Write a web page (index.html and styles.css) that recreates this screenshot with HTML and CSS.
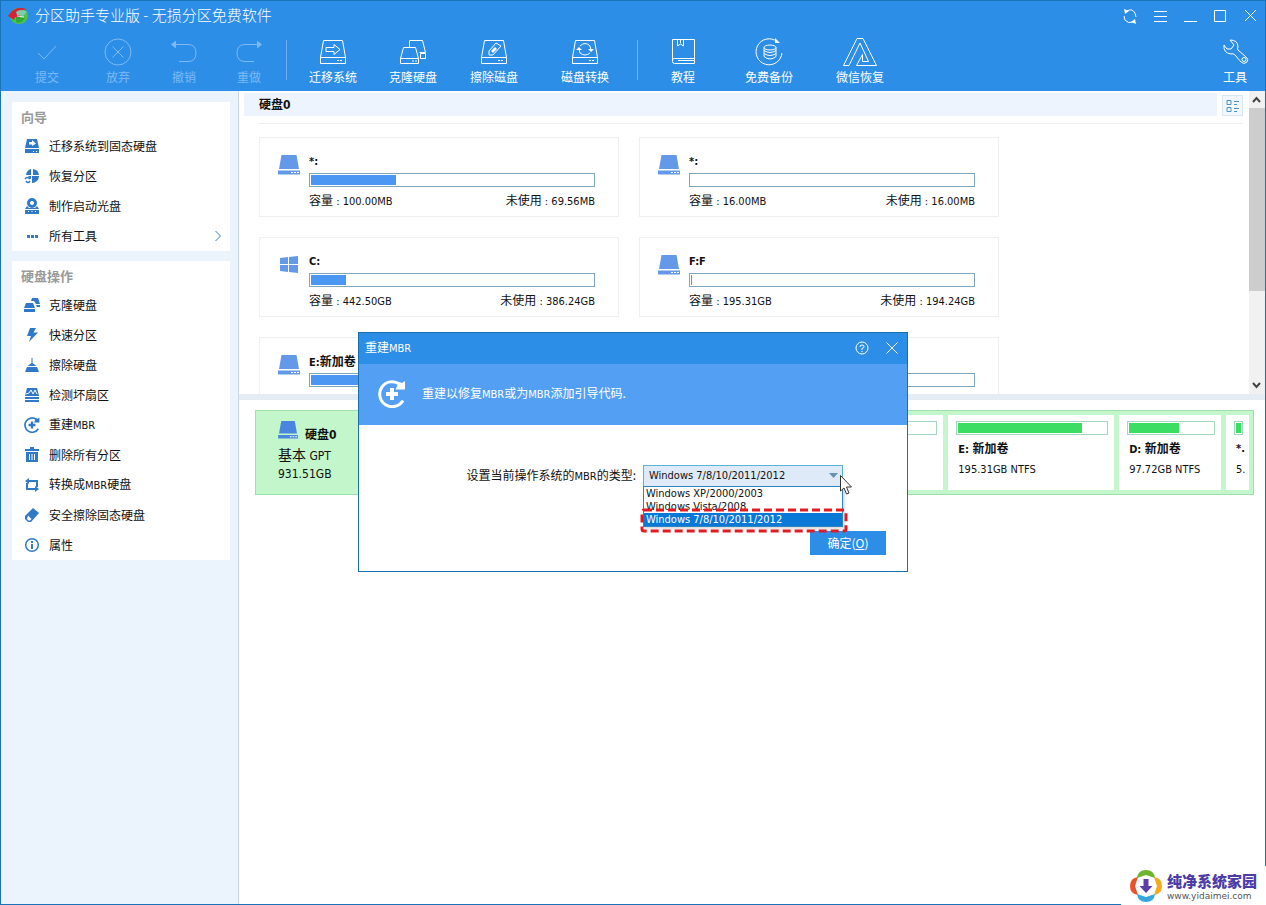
FILE: index.html
```html
<!DOCTYPE html>
<html lang="zh-CN">
<head>
<meta charset="utf-8">
<title>分区助手专业版 - 无损分区免费软件</title>
<link rel="stylesheet" href="styles.css">
</head>
<body>
<svg class="defs" aria-hidden="true">
  <symbol id="disk" viewBox="0 0 22 20"><path fill="currentColor" d="M3.500 0h15l2.500 14h-20zM0 15.500h22v4h-22z"/><path fill="#fff" d="M13 17h2v1h-2zM16 17h2v1h-2zM19 17h2v1h-2z"/></symbol>
  <symbol id="drive" viewBox="0 0 32 28"><path d="M6.500 2.500h19l3 17h-25zM3.500 19.500h25v6h-25zM20 22.500h2M23 22.500h2"/></symbol>
  <symbol id="rebuild" viewBox="0 0 28 28"><path d="M25 20.500A12.500 12.500 0 1 1 21.500 4" fill="none" stroke="currentColor" stroke-width="3"/><path fill="currentColor" d="M17.500 9.500h9.500V1l-3 2-3-1zM12 8h4v4h4v4h-4v4h-4v-4H8v-4h4z"/></symbol>
</svg>
<div class="window">
  <header class="header">
    <div class="titlebar">
      <svg class="logo" viewBox="0 0 22 18"><ellipse cx="12" cy="9" rx="9" ry="8" fill="#4fc24a"/><path d="M1 9l4-5q8-6 15-1-7-1-10 3l4 1-2 4-4-1-1 3z" fill="#d92230"/><path d="M9 5q5-4 11 0l-4 4-6-1z" fill="#7ccdb0"/><path d="M9 10l9 1q-4 6-9 4z" fill="#2fa838"/><path d="M10 9l7 1" stroke="#e9f4da"/></svg>
      <h1 class="title">分区助手专业版 - 无损分区免费软件</h1>
      <div class="controls">
        <button aria-label="刷新"><svg viewBox="0 0 16 16"><path d="M5 3Q10 0 13 5l1 4M11 14Q6 16 3 12L2 8"/><path d="M2 1l1 5 4-3zM14 16l-1-5-4 3z" fill="#fff" stroke="none"/></svg></button>
        <button aria-label="菜单"><svg viewBox="0 0 16 16"><path d="M2 3.500h13M2 8.500h13M2 13.500h13"/></svg></button>
        <button aria-label="最小化"><svg viewBox="0 0 16 16"><path d="M2 13.500h13"/></svg></button>
        <button aria-label="最大化"><svg viewBox="0 0 16 16"><path d="M2.500 2.500h11v11h-11z"/></svg></button>
        <button aria-label="关闭"><svg viewBox="0 0 16 16"><path d="M3 2l11 11M14 2L3 13"/></svg></button>
      </div>
    </div>
    <div class="toolbar">
      <div class="tools tools-edit">
        <button class="tool" disabled><svg viewBox="0 0 32 28"><path d="M7 15l6 6L25 8"/></svg>提交</button>
        <button class="tool" disabled><svg viewBox="0 0 32 28"><circle cx="16" cy="14" r="13"/><path d="M10.500 8.500l11 11M21.500 8.500l-11 11"/></svg>放弃</button>
        <button class="tool" disabled><svg viewBox="0 0 32 28"><path d="M6 6.500h14q8 0 8 8.500t-8 8.500h-9"/><path class="solid" d="M3 6.500l5-4v8z"/></svg>撤销</button>
        <button class="tool" disabled><svg viewBox="0 0 32 28"><path d="M26 6.500H12q-8 0-8 8.500t8 8.500h9"/><path class="solid" d="M29 6.500l-5-4v8z"/></svg>重做</button>
      </div>
      <div class="sep"></div>
      <div class="tools tools-disk">
        <button class="tool"><svg viewBox="0 0 32 28"><use href="#drive"/><path d="M9 9.500h8v-3l6 5-6 5v-3H9z"/></svg>迁移系统</button>
        <button class="tool"><svg viewBox="0 0 32 28"><path d="M6.500 9.500h12l3 11h-18zM3.500 20.500h18v5h-18zM15 23h2M18 23h2M12.500 9V2.500h13l3 12h-6M23.500 15.500h5v5h-5z"/></svg>克隆硬盘</button>
        <button class="tool"><svg viewBox="0 0 32 28"><use href="#drive"/><path d="M11 13l7-8 5 3-8 9h-4z"/><path class="solid" d="M13 13l4-4 2 2-4 4z"/></svg>擦除磁盘</button>
        <button class="tool"><svg viewBox="0 0 32 28"><use href="#drive"/><path d="M11 8q5-5 10 0l1 4M21 15q-5 4-10 0l-1-4"/><path class="solid" d="M19 11h6l-3 3zM7 12h6l-3-3z"/></svg>磁盘转换</button>
      </div>
      <div class="sep"></div>
      <div class="tools tools-help">
        <button class="tool"><svg viewBox="0 0 32 28"><path d="M5.500 1.500h22v24h-20q-2 0-2-2zM5.500 22q0-1.500 2-1.500h20M11 22.500h16M10.500 2v6l3-2 3 2V2M13.500 2v3"/></svg>教程</button>
        <button class="tool"><svg viewBox="0 0 32 28"><path d="M29 15A13 13 0 1 1 24 3.500"/><path class="solid" d="M22 5V0l5 5z"/><ellipse cx="17" cy="9.500" rx="6" ry="2.500"/><path d="M11 9.500v9q6 5 12 0v-9M11 12.500q6 4 12 0M11 15.500q6 4 12 0"/></svg>免费备份</button>
        <button class="tool"><svg class="wide" viewBox="0 0 36 28"><path d="M1.500 27.500L15 .5h6l13.500 27h-20l6-11v7h6L18 5 7 27.500z"/></svg>微信恢复</button>
      </div>
      <div class="tools tools-end">
        <button class="tool"><svg viewBox="0 0 32 28"><path d="M5 7q-1 8 7 9 2-1 4 1l6 7q3 3 6 0 2-3-1-5l-8-7q-1-1 0-3 0-7-8-7l4 5-3 4-4 0z"/><circle cx="25" cy="21.500" r="2"/></svg>工具</button>
      </div>
    </div>
  </header>

  <div class="content">
    <aside class="sidebar">
      <nav class="panel">
        <h2>向导</h2>
        <button class="item"><svg viewBox="0 0 16 16"><path fill="currentColor" d="M3 1h10l2 9H1zM1 11h14v4H1z"/><path fill="#fff" d="M5 4h3V2l4 3.500L8 8V6.500H5zM9 13h1v1H9zM12 13h1v1h-1z"/></svg>迁移系统到固态硬盘</button>
        <button class="item"><svg viewBox="0 0 16 16"><path fill="currentColor" d="M9 1v6h6A7 7 0 0 0 9 1zM7 1a7 7 0 0 0-5 6h5zM8 8h7a7 7 0 0 1-7 7zM7 8v3H6L4 8z"/><path d="M6 13q-2 3-4 0M1 11q2-3 5 0" fill="none" stroke="currentColor" stroke-width="1.500"/></svg>恢复分区</button>
        <button class="item"><svg viewBox="0 0 16 16"><circle cx="8" cy="5" r="3.500" fill="none" stroke="currentColor" stroke-width="3"/><path fill="currentColor" d="M3 8l2 2h6l2-2 2 3H1zM1 12h14v4H1z"/><path fill="#fff" d="M4 13h1v1H4zM7.500 13h1v1h-1zM11 13h1v1h-1z"/></svg>制作启动光盘</button>
        <button class="item"><svg viewBox="0 0 16 16"><path fill="currentColor" d="M3 7h3v3H3zM7 7h3v3H7zM11 7h3v3h-3z"/></svg>所有工具<svg class="chevron" viewBox="0 0 8 10"><path d="M2.500 0l5 5-5 5" fill="none" stroke="currentColor"/></svg></button>
      </nav>
      <nav class="panel">
        <h2>硬盘操作</h2>
        <button class="item"><svg viewBox="0 0 16 16"><path fill="currentColor" d="M2 6h7l2 5H0zM0 12h11v3H0zM8 1h6l2 6h-4l-2-3H7zM12 8h4v2h-3z"/></svg>克隆硬盘</button>
        <button class="item"><svg viewBox="0 0 16 16"><path fill="currentColor" d="M6 1h6L9.500 5.500H14L5 15l2-6H3z"/></svg>快速分区</button>
        <button class="item"><svg viewBox="0 0 16 16"><path fill="currentColor" d="M7.500 1h1v5l4 3h-9l4-3zM3 10h10l2 5H1z"/></svg>擦除硬盘</button>
        <button class="item"><svg viewBox="0 0 16 16"><path fill="currentColor" d="M3 1h10l2 8H1zM1 10h14v2H1zM1 13h14v2H1z"/><path d="M2 7l3-1 2-3 2 4 2-4 2 4" fill="none" stroke="#fff"/></svg>检测坏扇区</button>
        <button class="item"><svg><use href="#rebuild"/></svg><span>重建<span class="lat">MBR</span></span></button>
        <button class="item"><svg viewBox="0 0 16 16"><path fill="currentColor" d="M6 0h4v2h5v2H1V2h5zM2 5h12v10H2z"/><path stroke="#fff" d="M5.500 7v6M8 7v6M10.500 7v6"/></svg>删除所有分区</button>
        <button class="item"><svg viewBox="0 0 16 16"><path d="M4 4h9v6M12 12H3V6" fill="none" stroke="currentColor" stroke-width="2"/><path fill="currentColor" d="M5 1v6L1 4zM11 9v6l4-3z"/></svg><span>转换成<span class="lat">MBR</span>硬盘</span></button>
        <button class="item"><svg viewBox="0 0 16 16"><path fill="currentColor" d="M9 1l6 5-8 9H4L1 12V9z"/><path fill="#fff" d="M4 8.500l3.500 3.500L6 13.500H4.500L3 12z"/></svg>安全擦除固态硬盘</button>
        <button class="item"><svg viewBox="0 0 16 16"><circle cx="8" cy="8" r="6.300" fill="none" stroke="currentColor" stroke-width="1.500"/><path fill="currentColor" d="M7 4h2v2H7zM7 7h2v5H7z"/></svg>属性</button>
      </nav>
    </aside>

    <main class="main">
      <section class="volumes">
        <div class="volumes-view">
          <div class="strip-row">
            <h2 class="strip">硬盘<span class="num">0</span></h2>
            <button class="view" aria-label="视图"><svg viewBox="0 0 14 14"><path d="M1 1.500h4v4H1zM1 8.500h4v4H1zM8 2.500h5M8 5.500h3M8 9.500h5M8 12.500h3" fill="none" stroke="currentColor"/></svg></button>
          </div>
          <div class="cards">
            <article class="card"><svg class="vol-icon"><use href="#disk"/></svg><div class="vol"><h3>*:</h3><div class="bar"><i style="width:30%"></i></div><p><span>容量<span class="lat"> : 100.00MB</span></span><span>未使用<span class="lat"> : 69.56MB</span></span></p></div></article>
            <article class="card"><svg class="vol-icon"><use href="#disk"/></svg><div class="vol"><h3>*:</h3><div class="bar"></div><p><span>容量<span class="lat"> : 16.00MB</span></span><span>未使用<span class="lat"> : 16.00MB</span></span></p></div></article>
            <article class="card"><svg class="vol-icon" viewBox="0 0 22 20"><path fill="currentColor" d="M2 3l8-1v7H2zM11 2l9-1v8h-9zM2 10h8v7l-8-1zM11 10h9v8l-9-1z"/></svg><div class="vol"><h3>C:</h3><div class="bar"><i style="width:12.5%"></i></div><p><span>容量<span class="lat"> : 442.50GB</span></span><span>未使用<span class="lat"> : 386.24GB</span></span></p></div></article>
            <article class="card"><svg class="vol-icon"><use href="#disk"/></svg><div class="vol"><h3>F:F</h3><div class="bar"><i style="width:0.5%"></i></div><p><span>容量<span class="lat"> : 195.31GB</span></span><span>未使用<span class="lat"> : 194.24GB</span></span></p></div></article>
            <article class="card"><svg class="vol-icon"><use href="#disk"/></svg><div class="vol"><h3>E:<span class="cjk">新加卷</span></h3><div class="bar"><i style="width:83%"></i></div></div></article>
            <article class="card"><svg class="vol-icon"><use href="#disk"/></svg><div class="vol"><h3>D:</h3><div class="bar"><i style="width:58%"></i></div></div></article>
          </div>
        </div>
        <div class="scrollbar">
          <svg viewBox="0 0 15 16"><path d="M4 10l3.500-4L11 10"/></svg>
          <div class="thumb"></div>
          <svg viewBox="0 0 15 16"><path d="M4 6l3.500 4L11 6"/></svg>
        </div>
      </section>
      <section class="map">
        <div class="disk-row">
          <div class="disk-info">
            <h3><svg><use href="#disk"/></svg><span>硬盘<span class="num">0</span></span></h3>
            <p><span class="type">基本</span> GPT</p>
            <p>931.51GB</p>
          </div>
          <div class="part"><div class="bar"></div></div>
          <div class="part"><div class="bar"><i style="width:84%"></i></div><h3>E: <span class="cjk">新加卷</span></h3><p>195.31GB NTFS</p></div>
          <div class="part"><div class="bar"><i style="width:60%"></i></div><h3>D: <span class="cjk">新加卷</span></h3><p>97.72GB NTFS</p></div>
          <div class="part"><div class="bar"><i style="width:100%"></i></div><h3>*.</h3><p>5.</p></div>
        </div>
      </section>
    </main>
  </div>

  <div class="overlay">
    <section class="dialog" role="dialog" aria-labelledby="dlg-title">
      <header class="dialog-title">
        <h2 id="dlg-title">重建<span class="lat">MBR</span></h2>
        <button aria-label="帮助"><svg viewBox="0 0 16 16"><circle cx="8" cy="8" r="6"/><path d="M6 7q0-2 2-2t2 1.500Q10 8 8 8.500V10M8 11v1"/></svg></button>
        <button aria-label="关闭"><svg viewBox="0 0 16 16"><path d="M2.500 2.500l11 11M13.500 2.500l-11 11"/></svg></button>
      </header>
      <div class="banner"><svg><use href="#rebuild"/></svg><p>重建以修复<span class="lat">MBR</span>或为<span class="lat">MBR</span>添加引导代码.</p></div>
      <form class="form">
        <div class="field">
          <label for="mbr">设置当前操作系统的<span class="lat">MBR</span>的类型:</label>
          <div class="combo">
            <select id="mbr"><option>Windows 7/8/10/2011/2012</option></select>
            <svg class="arrow" viewBox="0 0 9 5"><path d="M0 0h9L4.500 5z" fill="#6391b8"/></svg>
            <ul class="options" role="listbox">
              <li role="option">Windows XP/2000/2003</li>
              <li role="option">Windows Vista/2008</li>
              <li role="option" class="selected" aria-selected="true">Windows 7/8/10/2011/2012</li>
            </ul>
            <svg class="mark" viewBox="0 0 208 25"><rect x="2" y="2" width="204" height="21" rx="2" fill="none" stroke="#e01b22" stroke-width="3" stroke-dasharray="8 4"/></svg>
            <svg class="cursor" viewBox="0 0 12 20"><path d="M.5.500v15.500l3.500-3 2.500 6 2.500-1-2.500-6h5z" fill="#fff" stroke="#333"/></svg>
          </div>
        </div>
        <button class="ok" type="button">确定(<u>O</u>)</button>
      </form>
    </section>
  </div>

  <div class="watermark">
    <svg viewBox="0 0 34 34"><path d="M8 9q1-8 9-8 8 0 9 8l-9-3z" fill="#6cb52c"/><path d="M25 8q8 1 8 9 0 8-8 9l3-9z" fill="#f7a81b"/><path d="M26 25q-1 8-9 8-8 0-9-8l9 3z" fill="#35a8e0"/><path d="M9 8Q1 9 1 17q0 8 8 9L6 17z" fill="#e9532c"/><path d="M14.500 10h5v7h4L17 24l-6.500-7h4z" fill="#5b3fa8"/></svg>
    <div><strong>纯净系统家园</strong><span>www.yidaimei.com</span></div>
  </div>
</div>
</body>
</html>
```
FILE: styles.css
```css
* { box-sizing: border-box; }
body, h1, h2, h3, p, ul { margin: 0; padding: 0; }
body {
  font: 12px/16px "Noto Sans CJK SC", sans-serif;
  color: #111;
}
button {
  font: inherit;
  color: inherit;
  border: 0;
  padding: 0;
  background: none;
}
svg { flex: none; }
.defs { position: absolute; width: 0; height: 0; }
.lat, .num, .vol h3, .disk-info p, .part, .combo {
  font-family: "DejaVu Sans Condensed", "Noto Sans CJK SC", sans-serif;
  font-size: 11px;
}
.num, .cjk { font-size: 12px; }

.window {
  position: relative;
  display: flex;
  flex-direction: column;
  min-height: 100vh;
  border: 1px solid #1a72b8;
  background: #fff;
}

/* Header */
.header { background: #2d8ee8; color: #fff; }
.titlebar { display: flex; align-items: center; height: 30px; padding-left: 6px; }
.logo { width: 22px; height: 18px; }
.title { flex: 1; margin-left: 6px; padding-bottom: 2px; font-size: 15px; font-weight: 300; line-height: 20px; }
.controls { display: flex; }
.controls button, .dialog-title button { display: grid; place-items: center; width: 30px; height: 30px; }
.controls svg, .dialog-title svg { width: 16px; height: 16px; fill: none; stroke: #fff; }
.toolbar { display: flex; height: 60px; padding: 7px 0 0 10px; }
.tools { display: grid; }
.tools-edit { grid-template-columns: 72px 70px 62px 68px; margin-right: 3px; }
.tools-disk { grid-template-columns: 92px 68px 94px 88px; margin-right: 8px; }
.tools-help { grid-template-columns: 90px 82px 100px; }
.tools-end { grid-template-columns: 60px; margin-left: auto; }
.tool { display: flex; flex-direction: column; align-items: center; gap: 3px; height: 48px; }
.tool svg { width: 32px; height: 28px; fill: none; stroke: currentColor; }
.tool svg.wide { width: 36px; }
.tool .solid { fill: currentColor; stroke: none; }
.tool:disabled { color: #7db9f3; }
.sep { width: 1px; height: 40px; margin-top: 2px; background: #6fb2f0; }

/* Sidebar */
.content { flex: 1; display: flex; }
.sidebar {
  display: flex;
  flex-direction: column;
  gap: 10px;
  width: 238px;
  padding: 11px 8px 0 11px;
  background: #ebf3fd;
  border-right: 1px solid #cbd7e8;
}
.panel { background: #fff; }
.panel h2 { padding: 7px 9px 6px; font-size: 13px; line-height: 16px; font-weight: 700; color: #999; }
.item { display: flex; align-items: center; gap: 9px; width: 100%; height: 30px; padding: 0 9px 0 12px; text-align: left; }
.item svg { width: 16px; height: 16px; color: #3079c8; }
.item .chevron { width: 8px; height: 10px; margin-left: auto; }

/* Volume list */
.main { flex: 1; min-width: 0; }
.volumes { display: flex; height: 303px; overflow: hidden; }
.volumes-view { flex: 1; min-width: 0; padding: 2px 6px 0 5px; }
.strip-row { display: flex; align-items: flex-end; gap: 5px; }
.strip { flex: 1; height: 23px; padding: 3px 15px; font-size: 12px; line-height: 16px; background: #edf4fd; }
.view { display: grid; place-items: center; width: 21px; height: 21px; border: 1px solid #d9e6f3; background: #f2f7fd; color: #4a93c8; }
.view svg { width: 14px; height: 14px; }
.cards {
  display: grid;
  grid-template-columns: repeat(auto-fill, 360px);
  gap: 20px;
  margin: 7px 0 0 15px;
  padding-top: 13px;
  border-top: 1px solid #eceef0;
}
.card { display: flex; gap: 9px; height: 80px; padding: 16px 23px 0 18px; border: 1px solid #efefef; }
.vol-icon { width: 22px; height: 20px; margin-top: 1px; color: #6399e8; }
.vol { flex: 1; }
.vol h3 { line-height: 16px; height: 16px; }
.vol .bar { margin: 3px 0 5px; }
.vol p { display: flex; justify-content: space-between; font: 12px/16px "Noto Sans CJK SC", sans-serif; }
.bar { height: 14px; padding: 1px; border: 1px solid #7ea6bd; }
.bar i { display: block; height: 10px; background: #4a96f2; }
.scrollbar { display: flex; flex-direction: column; width: 16px; padding: 1px 0; background: #f1f1f1; }
.scrollbar svg { width: 15px; height: 16px; fill: none; stroke: #444; stroke-width: 2; }
.thumb { height: 183px; margin-bottom: auto; background: #cdcdcd; }

/* Disk map */
.map { padding: 10px 11px 0 16px; border-top: 6px solid #e6ecf4; }
.disk-row {
  display: grid;
  grid-template-columns: 103px 580fr 166fr 102fr 23fr;
  gap: 5px;
  height: 85px;
  padding: 4px 4px 4px 0;
  border: 1px solid #9fe0aa;
  background: #c3f6ca;
}
.disk-info { padding: 6px 0 0 22px; }
.disk-info svg { width: 20px; height: 18px; color: #4a86e0; }
.disk-info h3 { display: flex; gap: 7px; height: 24px; font-size: 12px; line-height: 26px; }
.disk-info p { font-size: 12px; line-height: 20px; height: 19px; white-space: nowrap; }
.disk-info .type { font-size: 14px; }
.part { min-width: 0; padding: 6px 6px 0 8px; overflow: hidden; white-space: nowrap; background: #fff; }
.part .bar { border-color: #a5d8c0; }
.part .bar i { background: #3bdd63; }
.part h3 { margin: 6px 0 5px; padding-left: 2px; height: 16px; font-size: 11px; line-height: 16px; }
.part p { padding-left: 2px; }

/* Dialog */
.overlay { position: absolute; inset: 0; display: grid; place-items: center; padding-bottom: 2px; }
.dialog { width: 550px; height: 240px; border: 1px solid #1a6faf; background: #fff; }
.dialog-title { display: flex; align-items: center; height: 31px; padding-left: 6px; background: #2d8ee8; color: #fff; }
.dialog-title h2 { flex: 1; font-size: 12px; font-weight: 400; }
.banner { display: flex; align-items: center; gap: 16px; height: 61px; padding-left: 19px; background: #539ff3; color: #fff; }
.banner svg { width: 28px; height: 28px; }
.form { display: flex; flex-direction: column; align-items: flex-end; gap: 44px; padding: 40px 21px 0 0; }
.field { display: flex; align-items: center; gap: 7px; margin-right: 43px; }
.combo { position: relative; width: 200px; }
.combo select {
  display: block;
  appearance: none;
  width: 100%;
  height: 22px;
  padding: 0 5px;
  border: 1px solid #58b4d8;
  border-radius: 0;
  background: #dfeaf8;
  color: #111;
  font: inherit;
}
.arrow { position: absolute; right: 5px; top: 8px; width: 9px; height: 5px; }
.options { position: absolute; left: 0; top: 21px; width: 200px; border: 1px solid #2b87bd; background: #fff; list-style: none; box-shadow: 2px 2px 2px #9995; }
.options li { padding-left: 2px; line-height: 13px; }
.options .selected { background: #0a78d7; color: #fff; }
.mark { position: absolute; left: -3px; top: 43px; width: 208px; height: 25px; }
.cursor { position: absolute; right: -9px; top: 10px; width: 12px; height: 20px; }
.ok { width: 76px; height: 24px; background: #2d8ee8; color: #fff; }

/* Site mark */
.watermark {
  position: absolute;
  right: -1px;
  bottom: -1px;
  display: flex;
  align-items: center;
  gap: 4px;
  padding: 3px 9px 2px 8px;
  background: #fff;
  border-top-left-radius: 20px;
}
.watermark svg { width: 34px; height: 34px; }
.watermark strong { display: block; font-size: 15px; font-weight: 900; line-height: 20px; color: #4d3ba6; }
.watermark span { display: block; font: 9px/10px "DejaVu Sans", sans-serif; color: #555; }
```
